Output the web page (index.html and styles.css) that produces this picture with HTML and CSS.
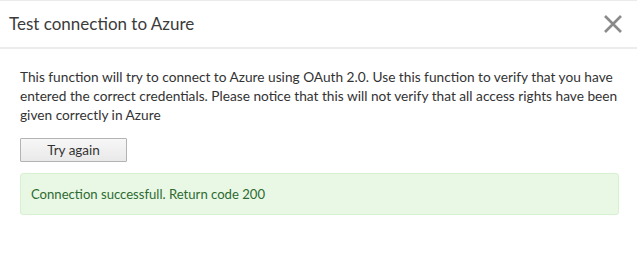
FILE: index.html
```html
<!DOCTYPE html>
<html>
<head>
<meta charset="utf-8">
<link rel="stylesheet" href="styles.css">
</head>
<body>
<div class="dialog">
  <div class="header">
    <div class="title">Test connection to Azure</div>
    <button class="close" aria-label="Close">
      <svg width="20" height="20" viewBox="0 0 20 20"><path d="M2 2 L18 18 M18 2 L2 18" stroke="#8a8a8a" stroke-width="2.6" stroke-linecap="butt"/></svg>
    </button>
  </div>
  <div class="content">
    <p class="desc">This function will try to connect to Azure using OAuth 2.0. Use this function to verify that you have entered the correct credentials. Please notice that this will not verify that all access rights have been given correctly in Azure</p>
    <button class="btn">Try again</button>
    <div class="success">Connection successfull. Return code 200</div>
  </div>
</div>
</body>
</html>
```
FILE: styles.css
```css
html, body {
  margin: 0;
  padding: 0;
  background: #fff;
}
.dialog {
  width: 637px;
  height: 254px;
  box-sizing: border-box;
  border-top: 1px solid #ebebeb;
  font-family: Lato, "Noto Sans", sans-serif;
  color: #333;
}
.header {
  height: 46px;
  display: flex;
  align-items: center;
  justify-content: space-between;
  padding: 0 14px 0 9px;
  border-bottom: 2px solid #ececec;
}
.title {
  font-size: 17px;
  color: #3b3b3b;
  margin-top: -1px;
}
.close {
  border: 0;
  background: none;
  padding: 0;
  width: 20px;
  height: 20px;
  display: flex;
}
.content {
  padding: 18px 18px 0 20px;
}
.desc {
  margin: 0;
  font-size: 13.7px;
  line-height: 19px;
  color: #333;
}
.btn {
  margin-top: 14px;
  width: 107px;
  height: 24px;
  font-family: inherit;
  font-size: 13.5px;
  color: #333;
  background: linear-gradient(#f7f7f7, #e9e9e9);
  border: 1px solid #b3b3b3;
  border-radius: 1px;
  padding: 0;
  display: block;
}
.success {
  margin-top: 11px;
  height: 42px;
  box-sizing: border-box;
  display: flex;
  align-items: center;
  padding-left: 10px;
  background: #e8f8e4;
  border: 1px solid #d7f0d0;
  border-radius: 3px;
  color: #2e6a32;
  font-size: 13.1px;
}
```
